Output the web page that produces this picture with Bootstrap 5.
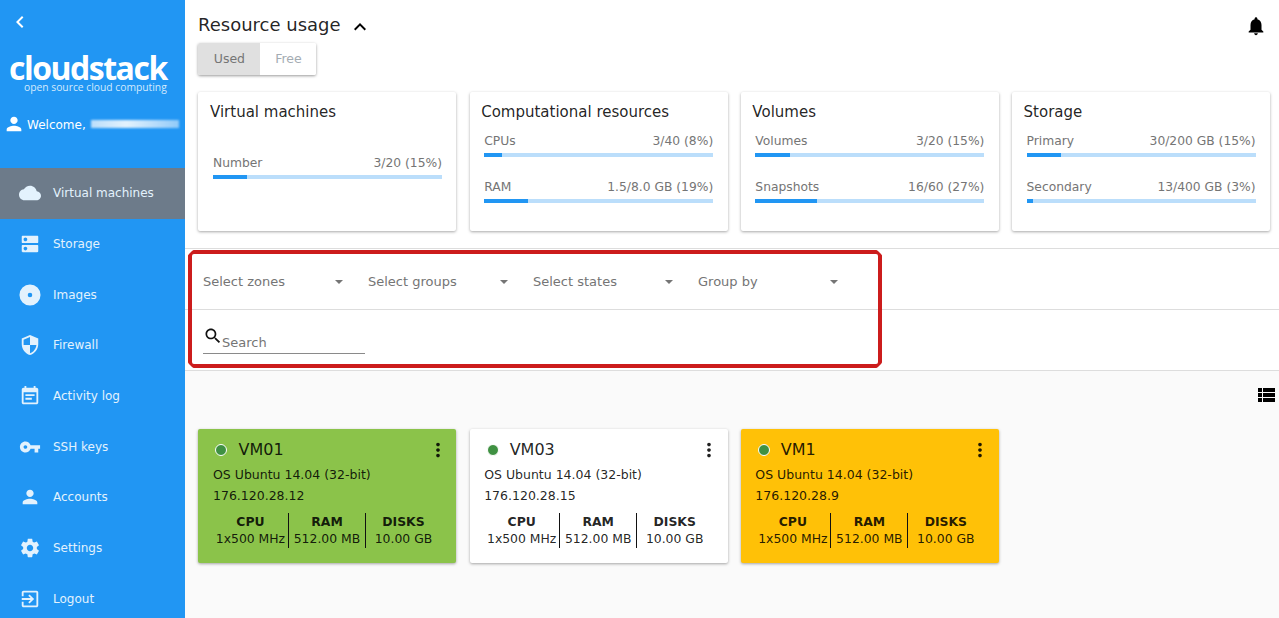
<!DOCTYPE html>
<html lang="en">
<head>
  <meta charset="UTF-8">
  <title>Virtual machines</title>
  <link href="https://cdn.jsdelivr.net/npm/bootstrap@5.3.0/dist/css/bootstrap.min.css" rel="stylesheet">
  <style>
    html, body { height: 618px; overflow: hidden; }
    body { font-family: "DejaVu Sans", sans-serif; font-size: 13px; color: rgba(0,0,0,.87); background: #fafafa; }
    svg { fill: currentColor; display: block; flex: none; }
    .side { width: 185px; height: 618px; background: #2196f3; color: #fff; flex: none; }
    .side-back { height: 46px; padding: 10px 0 0 8px; }
    .logo-box { height: 50px; padding: 8px 0 0 9px; line-height: 1; }
    .logo-name { font-family: "Open Sans", sans-serif; font-weight: 700; font-size: 32px; letter-spacing: -1.5px; line-height: 28px; height: 28px; }
    .logo-sub { font-family: "Open Sans", sans-serif; font-size: 10.3px; padding-left: 15px; color: #d3eafd; line-height: 11px; }
    .welcome { height: 72px; padding: 17px 0 0 3px; font-size: 12px; }
    .welcome-text { margin: 3px 0 0 2px; }
    .blur-name { width: 88px; height: 8px; margin: 7px 0 0 5px; background: linear-gradient(90deg, #bbdefb, #e3f2fd 40%, #bbdefb 70%, #90caf9); filter: blur(1px); }
    .side-item { height: 50.67px; padding-left: 19px; gap: 12px; color: #e3f2fd; font-size: 12px; text-decoration: none; }
    .side-item.current { background: #6d7b8a; }
    .main { flex: 1; min-width: 0; position: relative; }
    .top-zone { height: 248px; background: #fff; padding: 0 9px 0 13.4px; }
    .res-head { height: 43px; padding-top: 14px; color: #000; }
    .res-title { font-size: 18px; line-height: 22px; margin: 0 7px 0 -.4px; color: rgba(0,0,0,.87); }
    .head-less { margin-top: 1px; }
    .head-bell { margin: 1px 3px 0 auto; }
    .toggle-box { width: 118px; height: 32px; border-radius: 2px; overflow: hidden; box-shadow: 0 1px 3px rgba(0,0,0,.4); }
    .toggle-box div { height: 32px; line-height: 32px; text-align: center; font-size: 12.5px; }
    .tog-on { width: 62px; background: #e0e0e0; color: #757575; }
    .tog-off { width: 56px; background: #fff; color: #a4acb3; }
    .four-cols { display: grid; grid-template-columns: repeat(4, 258px); column-gap: 13.2px; }
    .res-grid { margin-top: 17px; }
    .res-card, .vm-card { border: 0; border-radius: 2px; box-shadow: 0 1px 3px rgba(0,0,0,.35); }
    .res-card { height: 139px; padding: 9px 14.4px 0 11.6px; }
    .res-name { font-size: 15px; line-height: 22px; margin: 0 0 8px; font-weight: 400; }
    .use-row { padding-left: 3px; margin-bottom: 19.5px; }
    .use-row .use-text { height: 22px; color: #757575; font-size: 12.3px; line-height: 21px; }
    .use-row .progress { height: 4px; border-radius: 0; background: #bbdefb; }
    .use-row .progress-bar { background: #2196f3; }
    .single-row { padding-top: 22px; }
    .filter-zone { background: #fff; border-top: 1px solid #ddd; }
    .filter-row { height: 61px; padding: 6px 0 0 18px; gap: 15px; border-bottom: 1px solid #ddd; }
    .pick { width: 150px; color: #757575; font-size: 13px; padding-right: 10px; }
    .pick i { border: 4px solid transparent; border-top-color: #757575; border-bottom: 0; display: block; }
    .search-row { height: 61px; padding: 16px 0 0 18px; border-bottom: 1px solid #ddd; }
    .search-box { width: 162px; height: 28px; border-bottom: 1px solid #8a8a8a; color: #757575; }
    .search-box svg { color: #111; }
    .search-box span { padding-top: 8px; line-height: 18px; margin-left: -1px; }
    .red-mark { position: absolute; left: 3px; top: 250px; width: 694px; height: 118px; border: 4px solid #cc1c1c; border-radius: 6px; pointer-events: none;
      clip-path: polygon(5px 0, calc(100% - 5px) 0, 100% 5px, 100% calc(100% - 5px), calc(100% - 5px) 100%, 5px 100%, 0 calc(100% - 5px), 0 5px); }
    .list-zone { padding: 0 9px 0 13.4px; }
    .view-row { height: 58px; padding-top: 12px; color: #000; }
    .view-row svg { margin-right: -8px; }
    .vm-card { height: 134px; padding: 10px 15.4px 0 14.6px; background: #fff; }
    .vm-card.paint-green { background: #8bc34a; }
    .vm-card.paint-yellow { background: #ffc107; }
    .vm-head { height: 22px; }
    .vm-head svg { margin-right: -8px; }
    .vm-dot { width: 12px; height: 12px; border-radius: 50%; background: #3f9142; border: 1px solid #fff; margin: 0 11px 0 2.5px; }
    .vm-name { font-size: 16px; line-height: 22px; }
    .vm-line { line-height: 21px; font-size: 12.5px; }
    .vm-lines { margin-top: 3px; }
    .vm-stats { margin-top: 7px; }
    .vm-stat { width: 76px; height: 35px; text-align: center; white-space: nowrap; line-height: 17px; font-size: 12.4px; }
    .vm-stat:first-child { width: 75px; }
    .vm-stat:nth-child(2) { width: 77px; }
    .vm-stat + .vm-stat { border-left: 1px solid #111; }
    .vm-stat b { display: block; }
  </style>
</head>
<body>

<svg width="0" height="0" class="position-absolute">
  <symbol id="i-back" viewBox="0 0 24 24"><path d="M15.41 7.41L14 6l-6 6 6 6 1.41-1.41L10.83 12z"/></symbol>
  <symbol id="i-cloud" viewBox="0 0 24 24"><path d="M19.35 10.04C18.67 6.59 15.64 4 12 4 9.11 4 6.6 5.64 5.35 8.04 2.34 8.36 0 10.91 0 14c0 3.31 2.69 6 6 6h13c2.76 0 5-2.24 5-5 0-2.64-2.05-4.78-4.65-4.96z"/></symbol>
  <symbol id="i-storage" viewBox="0 0 24 24"><path d="M20 13H4c-.55 0-1 .45-1 1v6c0 .55.45 1 1 1h16c.55 0 1-.45 1-1v-6c0-.55-.45-1-1-1zM7 19c-1.1 0-2-.9-2-2s.9-2 2-2 2 .9 2 2-.9 2-2 2zM20 3H4c-.55 0-1 .45-1 1v6c0 .55.45 1 1 1h16c.55 0 1-.45 1-1V4c0-.55-.45-1-1-1zM7 9c-1.1 0-2-.9-2-2s.9-2 2-2 2 .9 2 2-.9 2-2 2z"/></symbol>
  <symbol id="i-disc" viewBox="0 0 24 24"><path fill-rule="evenodd" d="M12 .5a11.5 11.5 0 1 0 0 23 11.5 11.5 0 0 0 0-23zm0 9a2.5 2.5 0 1 1 0 5 2.5 2.5 0 0 1 0-5z"/></symbol>
  <symbol id="i-shield" viewBox="0 0 24 24"><path d="M12 1L3 5v6c0 5.55 3.84 10.74 9 12 5.16-1.26 9-6.45 9-12V5l-9-4zm0 10.99h7c-.53 4.12-3.28 7.79-7 8.94V12H5V6.3l7-3.11v8.8z"/></symbol>
  <symbol id="i-note" viewBox="0 0 24 24"><path d="M17 10H7v2h10v-2zm2-7h-1V1h-2v2H8V1H6v2H5c-1.11 0-1.99.9-1.99 2L3 19c0 1.1.89 2 2 2h14c1.1 0 2-.9 2-2V5c0-1.1-.9-2-2-2zm0 16H5V8h14v11zm-5-5H7v2h7v-2z"/></symbol>
  <symbol id="i-key" viewBox="0 0 24 24"><path d="M12.65 10C11.83 7.67 9.61 6 7 6c-3.31 0-6 2.69-6 6s2.69 6 6 6c2.61 0 4.83-1.67 5.65-4H17v4h4v-4h2v-4H12.65zM7 14c-1.1 0-2-.9-2-2s.9-2 2-2 2 .9 2 2-.9 2-2 2z"/></symbol>
  <symbol id="i-person" viewBox="0 0 24 24"><path d="M12 12c2.21 0 4-1.79 4-4s-1.79-4-4-4-4 1.79-4 4 1.79 4 4 4zm0 2c-2.67 0-8 1.34-8 4v2h16v-2c0-2.66-5.33-4-8-4z"/></symbol>
  <symbol id="i-gear" viewBox="0 0 24 24"><path d="M19.43 12.98c.04-.32.07-.64.07-.98s-.03-.66-.07-.98l2.11-1.65c.19-.15.24-.42.12-.64l-2-3.46c-.12-.22-.39-.3-.61-.22l-2.49 1c-.52-.4-1.08-.73-1.69-.98l-.38-2.65C14.46 2.18 14.25 2 14 2h-4c-.25 0-.46.18-.49.42l-.38 2.65c-.61.25-1.17.59-1.69.98l-2.49-1c-.23-.09-.49 0-.61.22l-2 3.46c-.13.22-.07.49.12.64l2.11 1.65c-.04.32-.07.65-.07.98s.03.66.07.98l-2.11 1.65c-.19.15-.24.42-.12.64l2 3.46c.12.22.39.3.61.22l2.49-1c.52.4 1.08.73 1.69.98l.38 2.65c.03.24.24.42.49.42h4c.25 0 .46-.18.49-.42l.38-2.65c.61-.25 1.17-.59 1.69-.98l2.49 1c.23.09.49 0 .61-.22l2-3.46c.12-.22.07-.49-.12-.64l-2.11-1.65zM12 15.5c-1.93 0-3.5-1.57-3.5-3.5s1.57-3.5 3.5-3.5 3.5 1.57 3.5 3.5-1.57 3.5-3.5 3.5z"/></symbol>
  <symbol id="i-exit" viewBox="0 0 24 24"><path d="M10.09 15.59L11.5 17l5-5-5-5-1.41 1.41L12.67 11H3v2h9.67l-2.58 2.59zM19 3H5c-1.11 0-2 .9-2 2v4h2V5h14v14H5v-4H3v4c0 1.1.89 2 2 2h14c1.1 0 2-.9 2-2V5c0-1.1-.9-2-2-2z"/></symbol>
  <symbol id="i-less" viewBox="0 0 24 24"><path d="M12 8l-6 6 1.41 1.41L12 10.83l4.59 4.58L18 14z"/></symbol>
  <symbol id="i-bell" viewBox="0 0 24 24"><path d="M12 22c1.1 0 2-.9 2-2h-4c0 1.1.89 2 2 2zm6-6v-5c0-3.07-1.64-5.64-4.5-6.32V4c0-.83-.67-1.5-1.5-1.5s-1.5.67-1.5 1.5v.68C7.63 5.36 6 7.92 6 11v5l-2 2v1h16v-1l-2-2z"/></symbol>
  <symbol id="i-search" viewBox="0 0 24 24"><path d="M15.5 14h-.79l-.28-.27C15.41 12.59 16 11.11 16 9.5 16 5.91 13.09 3 9.5 3S3 5.91 3 9.5 5.91 16 9.5 16c1.61 0 3.09-.59 4.23-1.57l.27.28v.79l5 4.99L20.49 19l-4.99-5zm-6 0C7.01 14 5 11.99 5 9.5S7.01 5 9.5 5 14 7.01 14 9.5 11.99 14 9.5 14z"/></symbol>
  <symbol id="i-list" viewBox="0 0 24 24"><path d="M4 14h4v-4H4v4zm0 5h4v-4H4v4zM4 9h4V5H4v4zm5 5h12v-4H9v4zm0 5h12v-4H9v4zM9 5v4h12V5H9z"/></symbol>
  <symbol id="i-more" viewBox="0 0 24 24"><path d="M12 8c1.1 0 2-.9 2-2s-.9-2-2-2-2 .9-2 2 .9 2 2 2zm0 2c-1.1 0-2 .9-2 2s.9 2 2 2 2-.9 2-2-.9-2-2-2zm0 6c-1.1 0-2 .9-2 2s.9 2 2 2 2-.9 2-2-.9-2-2-2z"/></symbol>
</svg>

<div class="d-flex">
  <aside class="side">
    <div class="side-back"><svg width="24" height="24"><use href="#i-back"/></svg></div>
    <div class="logo-box">
      <div class="logo-name">cloudstack</div>
      <div class="logo-sub">open source cloud computing</div>
    </div>
    <div class="welcome d-flex align-items-start">
      <svg width="22" height="22"><use href="#i-person"/></svg>
      <span class="welcome-text">Welcome,</span>
      <div class="blur-name"></div>
    </div>
    <nav class="d-flex flex-column">
      <a class="side-item current d-flex align-items-center" href="#"><svg width="22" height="22"><use href="#i-cloud"/></svg>Virtual machines</a>
      <a class="side-item d-flex align-items-center" href="#"><svg width="22" height="22"><use href="#i-storage"/></svg>Storage</a>
      <a class="side-item d-flex align-items-center" href="#"><svg width="22" height="22"><use href="#i-disc"/></svg>Images</a>
      <a class="side-item d-flex align-items-center" href="#"><svg width="22" height="22"><use href="#i-shield"/></svg>Firewall</a>
      <a class="side-item d-flex align-items-center" href="#"><svg width="22" height="22"><use href="#i-note"/></svg>Activity log</a>
      <a class="side-item d-flex align-items-center" href="#"><svg width="22" height="22"><use href="#i-key"/></svg>SSH keys</a>
      <a class="side-item d-flex align-items-center" href="#"><svg width="22" height="22"><use href="#i-person"/></svg>Accounts</a>
      <a class="side-item d-flex align-items-center" href="#"><svg width="22" height="22"><use href="#i-gear"/></svg>Settings</a>
      <a class="side-item d-flex align-items-center" href="#"><svg width="22" height="22"><use href="#i-exit"/></svg>Logout</a>
    </nav>
  </aside>

  <main class="main">
    <div class="top-zone">
      <div class="res-head d-flex align-items-start">
        <div class="res-title">Resource usage</div>
        <svg class="head-less" width="24" height="24"><use href="#i-less"/></svg>
        <svg class="head-bell" width="22" height="22"><use href="#i-bell"/></svg>
      </div>
      <div class="toggle-box d-flex">
        <div class="tog-on">Used</div>
        <div class="tog-off">Free</div>
      </div>
      <div class="four-cols res-grid">
        <div class="card res-card">
          <h5 class="res-name">Virtual machines</h5>
          <div class="use-row single-row">
            <div class="use-text d-flex justify-content-between"><span>Number</span><span>3/20 (15%)</span></div>
            <div class="progress"><div class="progress-bar" style="width:15%"></div></div>
          </div>
        </div>
        <div class="card res-card">
          <h5 class="res-name">Computational resources</h5>
          <div class="use-row">
            <div class="use-text d-flex justify-content-between"><span>CPUs</span><span>3/40 (8%)</span></div>
            <div class="progress"><div class="progress-bar" style="width:8%"></div></div>
          </div>
          <div class="use-row">
            <div class="use-text d-flex justify-content-between"><span>RAM</span><span>1.5/8.0 GB (19%)</span></div>
            <div class="progress"><div class="progress-bar" style="width:19%"></div></div>
          </div>
        </div>
        <div class="card res-card">
          <h5 class="res-name">Volumes</h5>
          <div class="use-row">
            <div class="use-text d-flex justify-content-between"><span>Volumes</span><span>3/20 (15%)</span></div>
            <div class="progress"><div class="progress-bar" style="width:15%"></div></div>
          </div>
          <div class="use-row">
            <div class="use-text d-flex justify-content-between"><span>Snapshots</span><span>16/60 (27%)</span></div>
            <div class="progress"><div class="progress-bar" style="width:27%"></div></div>
          </div>
        </div>
        <div class="card res-card">
          <h5 class="res-name">Storage</h5>
          <div class="use-row">
            <div class="use-text d-flex justify-content-between"><span>Primary</span><span>30/200 GB (15%)</span></div>
            <div class="progress"><div class="progress-bar" style="width:15%"></div></div>
          </div>
          <div class="use-row">
            <div class="use-text d-flex justify-content-between"><span>Secondary</span><span>13/400 GB (3%)</span></div>
            <div class="progress"><div class="progress-bar" style="width:3%"></div></div>
          </div>
        </div>
      </div>
    </div>

    <div class="filter-zone">
      <div class="filter-row d-flex align-items-center">
        <div class="pick d-flex justify-content-between align-items-center"><span>Select zones</span><i></i></div>
        <div class="pick d-flex justify-content-between align-items-center"><span>Select groups</span><i></i></div>
        <div class="pick d-flex justify-content-between align-items-center"><span>Select states</span><i></i></div>
        <div class="pick d-flex justify-content-between align-items-center"><span>Group by</span><i></i></div>
      </div>
      <div class="search-row">
        <div class="search-box d-flex">
          <svg width="20" height="20"><use href="#i-search"/></svg>
          <span>Search</span>
        </div>
      </div>
    </div>
    <div class="red-mark"></div>

    <div class="list-zone">
      <div class="view-row d-flex justify-content-end">
        <svg width="24" height="24"><use href="#i-list"/></svg>
      </div>
      <div class="four-cols">
        <div class="card vm-card paint-green">
          <div class="vm-head d-flex align-items-center">
            <span class="vm-dot"></span><span class="vm-name">VM01</span>
            <svg class="ms-auto" width="22" height="22"><use href="#i-more"/></svg>
          </div>
          <div class="vm-lines">
            <div class="vm-line">OS Ubuntu 14.04 (32-bit)</div>
            <div class="vm-line">176.120.28.12</div>
          </div>
          <div class="vm-stats d-flex">
            <div class="vm-stat"><b>CPU</b>1x500 MHz</div>
            <div class="vm-stat"><b>RAM</b>512.00 MB</div>
            <div class="vm-stat"><b>DISKS</b>10.00 GB</div>
          </div>
        </div>
        <div class="card vm-card">
          <div class="vm-head d-flex align-items-center">
            <span class="vm-dot"></span><span class="vm-name">VM03</span>
            <svg class="ms-auto" width="22" height="22"><use href="#i-more"/></svg>
          </div>
          <div class="vm-lines">
            <div class="vm-line">OS Ubuntu 14.04 (32-bit)</div>
            <div class="vm-line">176.120.28.15</div>
          </div>
          <div class="vm-stats d-flex">
            <div class="vm-stat"><b>CPU</b>1x500 MHz</div>
            <div class="vm-stat"><b>RAM</b>512.00 MB</div>
            <div class="vm-stat"><b>DISKS</b>10.00 GB</div>
          </div>
        </div>
        <div class="card vm-card paint-yellow">
          <div class="vm-head d-flex align-items-center">
            <span class="vm-dot"></span><span class="vm-name">VM1</span>
            <svg class="ms-auto" width="22" height="22"><use href="#i-more"/></svg>
          </div>
          <div class="vm-lines">
            <div class="vm-line">OS Ubuntu 14.04 (32-bit)</div>
            <div class="vm-line">176.120.28.9</div>
          </div>
          <div class="vm-stats d-flex">
            <div class="vm-stat"><b>CPU</b>1x500 MHz</div>
            <div class="vm-stat"><b>RAM</b>512.00 MB</div>
            <div class="vm-stat"><b>DISKS</b>10.00 GB</div>
          </div>
        </div>
      </div>
    </div>
  </main>
</div>

<script src="https://cdn.jsdelivr.net/npm/bootstrap@5.3.0/dist/js/bootstrap.bundle.min.js"></script>
</body>
</html>
